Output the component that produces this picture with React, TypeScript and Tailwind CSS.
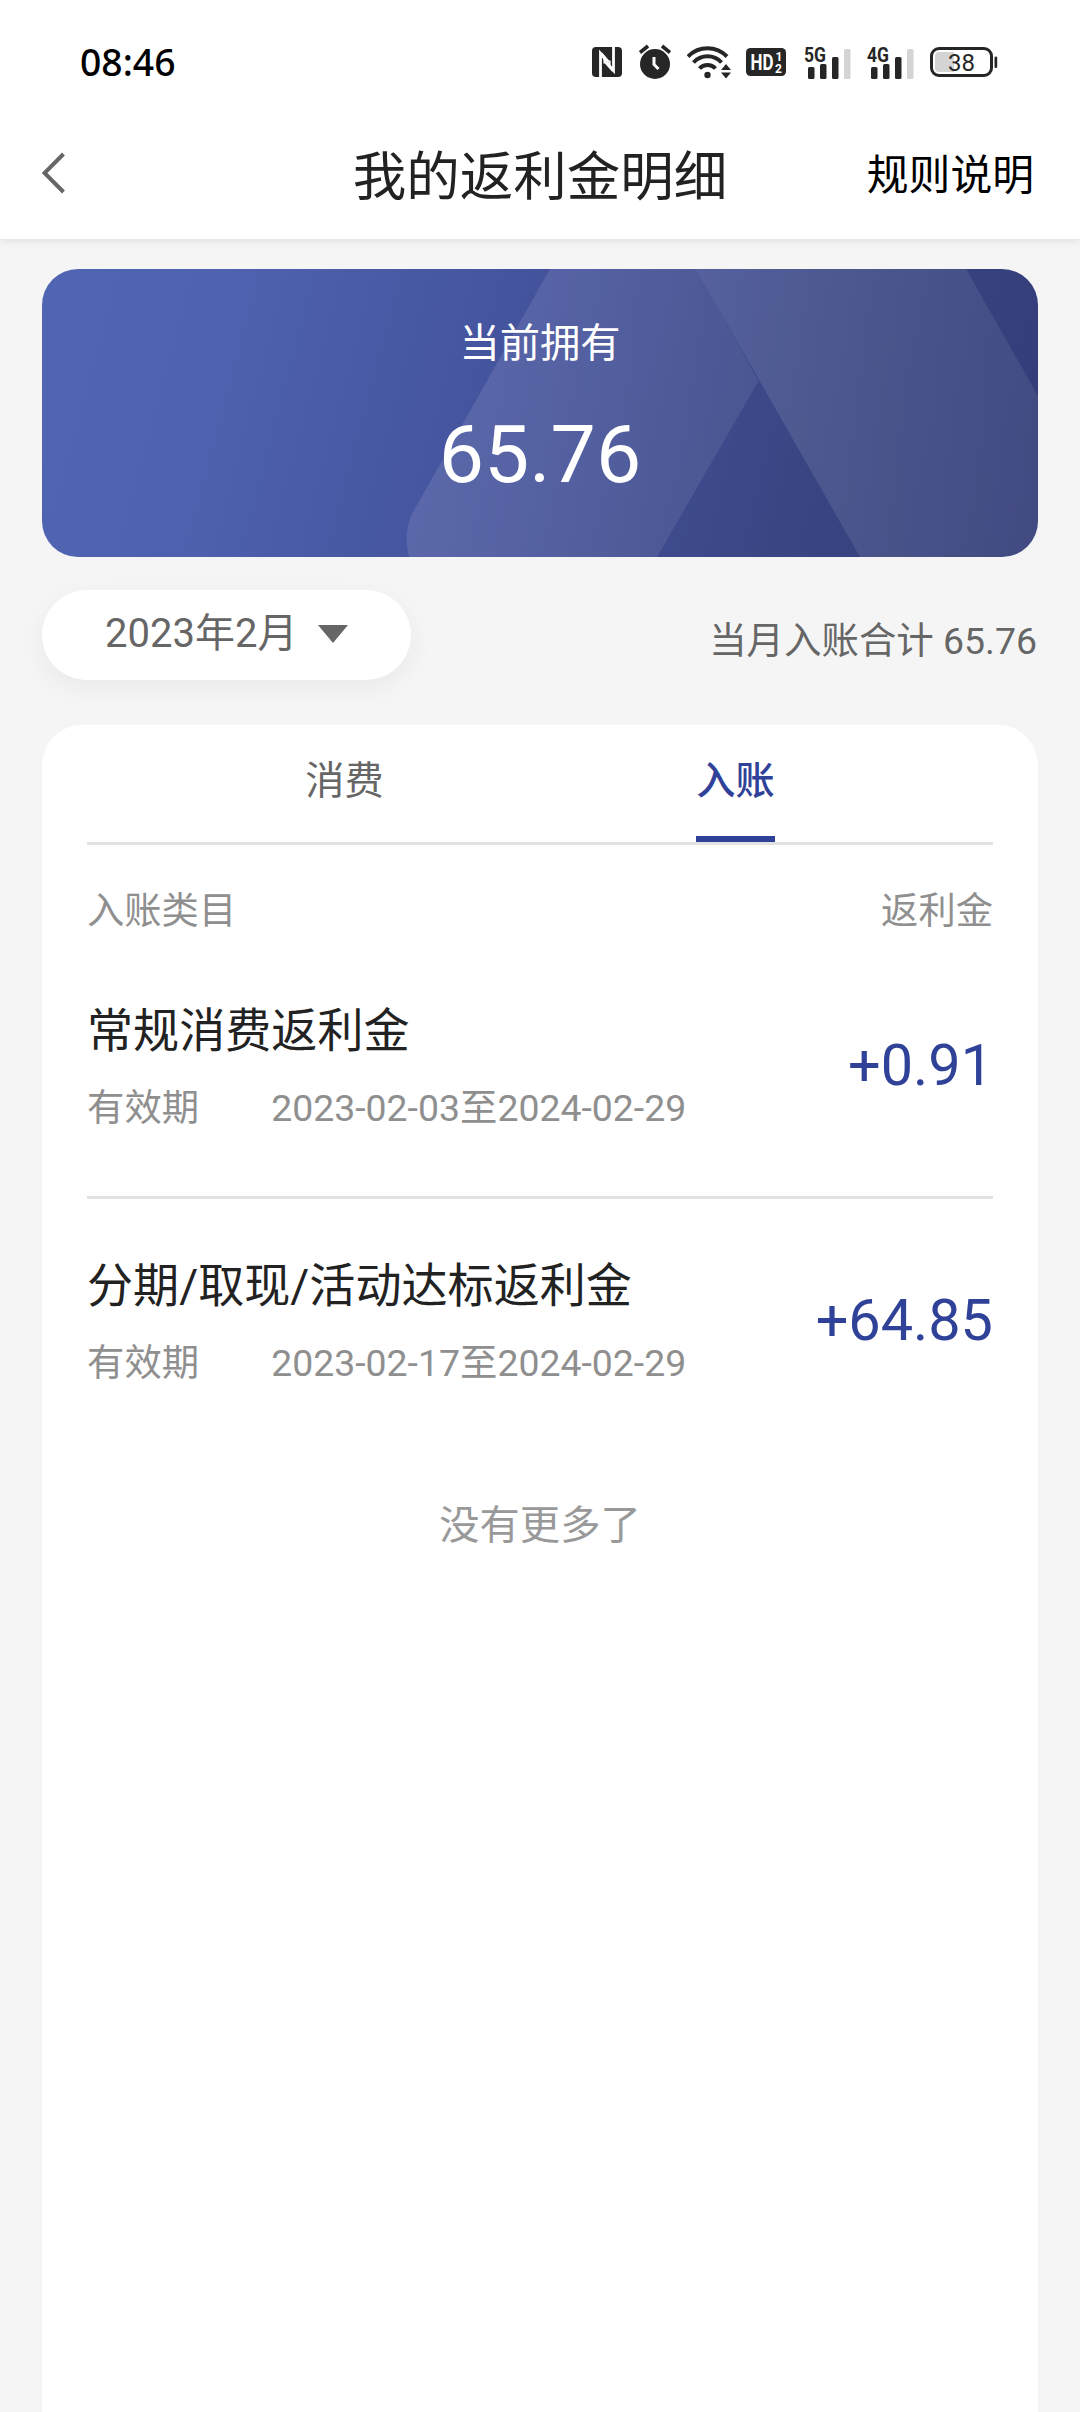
import * as React from "react";

type Entry = {
  title: string;
  from: string;
  to: string;
  amount: string;
};

const ENTRIES: Entry[] = [
  {
    title: "常规消费返利金",
    from: "2023-02-03",
    to: "2024-02-29",
    amount: "+0.91",
  },
  {
    title: "分期/取现/活动达标返利金",
    from: "2023-02-17",
    to: "2024-02-29",
    amount: "+64.85",
  },
];

const TABS = [
  { key: "spend", label: "消费" },
  { key: "income", label: "入账" },
];

function Signal({ label }: { label: string }) {
  return (
    <svg width="48" height="40" viewBox="0 -4 48 40" className="block overflow-visible">
      <text
        x="0"
        y="15.500"
        fontSize="21"
        fontWeight="700"
        fill="#262626"
        textLength="22"
        lengthAdjust="spacingAndGlyphs"
      >
        {label}
      </text>
      <rect x="4" y="21" width="6.500" height="12" rx="1.500" fill="#262626" />
      <rect x="16" y="18" width="6.500" height="15" rx="1.500" fill="#262626" />
      <rect x="28" y="11" width="6.500" height="22" rx="1.500" fill="#262626" />
      <rect x="40" y="3" width="6.500" height="30" rx="1.500" fill="#d4d4d4" />
    </svg>
  );
}

function StatusIcons() {
  return (
    <div className="flex items-center">
      {/* NFC */}
      <svg width="30" height="30" viewBox="0 0 30 30" className="block">
        <rect width="30" height="30" rx="4" fill="#262626" />
        <path
          d="M8.500 30V6.500L15 14.500M21.500 0V23.500L14.500 15.500"
          fill="none"
          stroke="#fff"
          strokeWidth="2.800"
        />
        <path
          d="M9 6l7.500 8.500M21 24l-7.500-8.500M12.500 12v4.500M17.500 18v-4.500"
          fill="none"
          stroke="#fff"
          strokeWidth="2.200"
        />
      </svg>
      {/* alarm */}
      <svg width="32" height="36" viewBox="0 0 32 36" className="ml-[17px] block">
        <circle cx="16" cy="20" r="15" fill="#262626" />
        <path
          d="M1 8.500L9 2M31 8.500L23 2"
          stroke="#262626"
          strokeWidth="3.600"
          fill="none"
        />
        <path d="M15 13v7.500l4.500 4.500" stroke="#fff" strokeWidth="3" fill="none" />
      </svg>
      {/* wifi */}
      <svg width="44" height="36" viewBox="0 0 44 36" className="ml-4 block">
        <g fill="none" stroke="#262626" strokeWidth="4">
          <path d="M1 12.500A27 27 0 0 1 40 12.500" />
          <path d="M6.500 18.500A19 19 0 0 1 34.500 18.500" />
          <path d="M12.500 24.500A11 11 0 0 1 28.500 24.500" />
        </g>
        <circle cx="20.500" cy="31" r="3.200" fill="#262626" />
        <path d="M34 26l5-6 5 6zM34 28.500l5 6 5-6z" fill="#262626" />
      </svg>
      {/* HD */}
      <svg width="40" height="28" viewBox="0 0 40 28" className="ml-[15px] block">
        <rect width="40" height="28" rx="4.500" fill="#262626" />
        <text
          x="4.500"
          y="22"
          fontSize="22"
          fontWeight="700"
          fill="#fff"
          textLength="23"
          lengthAdjust="spacingAndGlyphs"
        >
          HD
        </text>
        <text x="29.500" y="12.500" fontSize="12" fontWeight="700" fill="#fff">
          1
        </text>
        <text x="29" y="25" fontSize="12" fontWeight="700" fill="#fff">
          2
        </text>
      </svg>
      <div className="ml-[18px]">
        <Signal label="5G" />
      </div>
      <div className="ml-[15px]">
        <Signal label="4G" />
      </div>
      {/* battery */}
      <svg width="68" height="30" viewBox="0 0 68 30" className="ml-[15px] block">
        <rect
          x="1.500"
          y="1.500"
          width="60"
          height="27"
          rx="7.500"
          fill="#fff"
          stroke="#262626"
          strokeWidth="3"
        />
        <path d="M9 5H24V25H9a4 4 0 0 1-4-4V9a4 4 0 0 1 4-4z" fill="#d4d4d4" />
        <rect x="64.500" y="9.500" width="2.700" height="11.500" rx="1.300" fill="#262626" />
        <text x="31.500" y="23.500" fontSize="24" fill="#262626" textAnchor="middle">
          38
        </text>
      </svg>
    </div>
  );
}

function StatusBar() {
  return (
    <div className="flex h-[124px] items-center justify-between pl-[80px] pr-[82px]">
      <span className="font-['Noto_Sans'] text-[37.300px] font-medium leading-[50px] text-black">
        08:46
      </span>
      <StatusIcons />
    </div>
  );
}

function Header() {
  return (
    <div className="grid h-[115px] grid-cols-[1fr_378px_1fr] items-start">
      <svg
        width="24"
        height="42"
        viewBox="0 0 24 42"
        className="ml-[42px] mt-[28px] block"
      >
        <path
          d="M21.500 2L2.500 21L21.500 40"
          fill="none"
          stroke="#666"
          strokeWidth="4"
        />
      </svg>
      <h1 className="mt-[14px] whitespace-nowrap text-center text-[53.500px] leading-[80px] text-[#222]">
        我的返利金明细
      </h1>
      <span className="mr-[46px] mt-[22px] text-right text-[41.800px] leading-[60px] text-black">
        规则说明
      </span>
    </div>
  );
}

function Balance() {
  return (
    <div className="relative h-[288px] overflow-hidden rounded-[36px] bg-[linear-gradient(105deg,#5166b2_0%,#4d61ae_20%,#43519a_50%,#3a4684_75%,#333c78_100%)] text-center text-white">
      <svg
        width="996"
        height="288"
        viewBox="0 0 996 288"
        className="absolute inset-0"
      >
        <defs>
          <linearGradient id="sheen-left" x1="0" y1="0" x2="1" y2="0">
            <stop offset="0" stopColor="#fff" stopOpacity="0.110" />
            <stop offset="1" stopColor="#fff" stopOpacity="0.075" />
          </linearGradient>
          <linearGradient id="sheen-right" x1="0" y1="0" x2="1" y2="0">
            <stop offset="0" stopColor="#fff" stopOpacity="0.115" />
            <stop offset="1" stopColor="#fff" stopOpacity="0.070" />
          </linearGradient>
        </defs>
        <path
          d="M508 0H654.500L716.500 112L615 288H367Q361 265 370 245Z"
          fill="url(#sheen-left)"
        />
        <path d="M654 0H924L996 127V288H818Z" fill="url(#sheen-right)" />
      </svg>
      <div className="relative pt-[46px] text-[40.300px] leading-[58px]">当前拥有</div>
      <div className="relative mt-[34px] text-[80.600px] leading-[96px]">65.76</div>
    </div>
  );
}

function MonthBar() {
  return (
    <div className="mt-[33px] flex h-[90px] justify-between">
      <button className="flex w-[369px] items-start rounded-full bg-white pl-[63px] text-[40px] leading-[88px] text-[#666] shadow-[0_8px_28px_rgba(0,0,0,0.05)]">
        2023年2月
        <svg width="30" height="18" viewBox="0 0 30 18" className="ml-[21px] mt-[35px] block">
          <path d="M0 0H30L15 18Z" fill="#666" />
        </svg>
      </button>
      <span className="mr-px mt-[23px] text-[37.440px] leading-[56px] text-[#666]">
        当月入账合计 65.76
      </span>
    </div>
  );
}

function Row({ entry }: { entry: Entry }) {
  return (
    <div className="flex h-[255px] justify-between">
      <div>
        <div className="mt-[54px] text-[46.080px] leading-[66px] text-[#222]">
          {entry.title}
        </div>
        <div className="mt-[17px] flex gap-[72px] text-[37.400px] leading-[54px] text-[#8f8f8f]">
          <span>有效期</span>
          <span>
            {entry.from}至{entry.to}
          </span>
        </div>
      </div>
      <div className="mt-[88px] text-[57.600px] leading-[68px] text-[#304298]">
        {entry.amount}
      </div>
    </div>
  );
}

export default function App() {
  const [tab, setTab] = React.useState("income");

  return (
    <div className="flex h-[2412px] w-[1080px] flex-col overflow-hidden bg-[#f5f5f5] font-[Roboto,'Noto_Sans_CJK_SC',sans-serif]">
      <div className="bg-white shadow-[0_3px_6px_rgba(0,0,0,0.07)]">
        <StatusBar />
        <Header />
      </div>

      <div className="flex flex-1 flex-col px-[42px] pt-[30px]">
        <Balance />
        <MonthBar />

        <div className="mt-[45px] flex-1 rounded-t-[40px] bg-white px-[45px]">
          <div className="flex h-[120px] justify-around border-b-[3px] border-[#e2e2e2] px-[62px]">
            {TABS.map((t) => (
              <button
                key={t.key}
                onClick={() => setTab(t.key)}
                className={
                  t.key === tab
                    ? "flex h-[117px] items-start border-b-[6px] border-[#304298] text-[39.200px] font-medium leading-[112px] text-[#304298]"
                    : "flex h-[117px] items-start text-[39.200px] leading-[112px] text-[#666]"
                }
              >
                {t.label}
              </button>
            ))}
          </div>

          <div className="mt-[39px] flex justify-between text-[37.300px] leading-[54px] text-[#8f8f8f]">
            <span>入账类目</span>
            <span>返利金</span>
          </div>

          <div className="mt-[6px] divide-y-[3px] divide-[#e2e2e2]">
            {ENTRIES.map((e) => (
              <Row key={e.from} entry={e} />
            ))}
          </div>

          <div className="mt-[43px] text-center text-[40.300px] leading-[58px] text-[#999]">
            没有更多了
          </div>
        </div>
      </div>
    </div>
  );
}
